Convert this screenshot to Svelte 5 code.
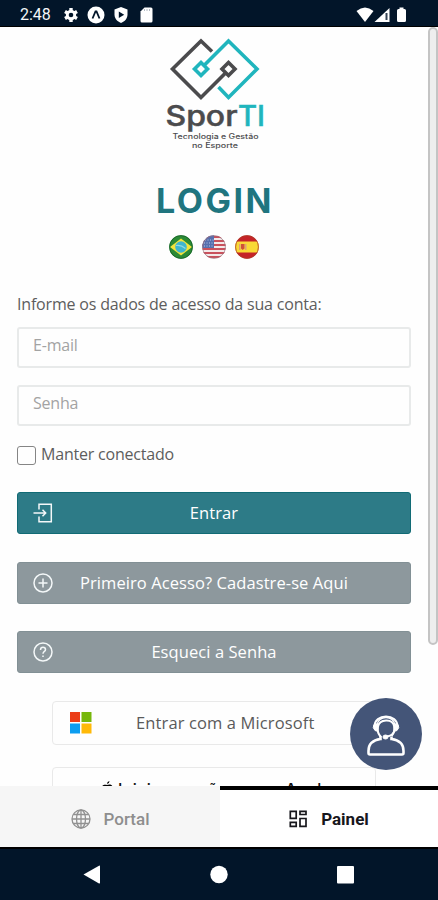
<script lang="ts">
    let email = $state('');
    let password = $state('');
    let keepConnected = $state(false);
</script>

<div class="screen">
    <header class="status-bar">
        <span class="clock">2:48</span>
        <svg class="status-left" width="96" height="20" viewBox="0 0 96 20">
            <g fill="#fff">
                <circle cx="9" cy="10" r="5.2" />
                <g stroke="#fff" stroke-width="3.4">
                    <path d="M9 3v14M3 6.5l12 7M15 6.5l-12 7" />
                </g>
                <circle cx="9" cy="10" r="2.3" fill="#021529" />
                <circle cx="34" cy="10" r="8.5" />
                <path d="M30.5 13.5l3-7h1l3 7" fill="none" stroke="#021529" stroke-width="1.8" />
                <path d="M59 2l6.500 2.500v5c0 4-2.700 7-6.500 8.500-3.800-1.500-6.500-4.500-6.500-8.500v-5z" />
                <path d="M56.800 6.600v6.400l5.400-3.200z" fill="#021529" />
                <path d="M82.500 2.500H89a1.500 1.500 0 0 1 1.500 1.500v12a1.500 1.500 0 0 1-1.500 1.500h-9a1.500 1.500 0 0 1-1.500-1.500V6.500z" />
                <path d="M82.500 4v2M85 4v2M87.500 4v2" stroke="#b3bac2" stroke-width="1" />
            </g>
        </svg>
        <svg class="status-right" width="54" height="20" viewBox="0 0 54 20">
            <path d="M1.500 6Q10 -1 18.500 6L10 17z" fill="#fff" />
            <path d="M34.500 3v14h-15z" fill="#fff" />
            <path d="M31.500 8v7" stroke="#344355" stroke-width="2" />
            <path d="M44.500 2.500h4V4h1a1.500 1.500 0 0 1 1.500 1.500v10a1.500 1.500 0 0 1-1.500 1.500h-6a1.500 1.500 0 0 1-1.500-1.500v-10A1.500 1.500 0 0 1 43.500 4h1z" fill="#fff" />
        </svg>
    </header>

    <main class="page">
        <div class="scrollbar"></div>

        <svg class="logo" width="110" height="120" viewBox="0 0 110 120">
            <g fill="none" stroke-width="3.600">
                <path d="M47 21.500L36 11 7.500 39 36 67.500l24-24" stroke="#4b4b4d" />
                <path d="M63.500 32.500l6.500 6.500-6.500 6.500-6.500-6.500z" stroke="#4b4b4d" />
                <path d="M39 35.500L63.500 11 92 39 63.500 67.500 53.500 57" stroke="#20b5bd" />
                <path d="M36 32.500l6.500 6.500-6.500 6.500-6.500-6.500z" stroke="#20b5bd" />
            </g>
            <text class="brand" x=".5" y="95.500" textLength="72" lengthAdjust="spacingAndGlyphs">Spor</text>
            <text class="brand accent" x="73" y="95.500" textLength="27" lengthAdjust="spacingAndGlyphs">TI</text>
            <text class="tagline" x="7.500" y="109" textLength="86" lengthAdjust="spacingAndGlyphs">Tecnologia e Gestão</text>
            <text class="tagline" x="27" y="118" textLength="46" lengthAdjust="spacingAndGlyphs">no Esporte</text>
        </svg>

        <h1>LOGIN</h1>

        <div class="flags">
            <svg width="24" height="24" viewBox="0 0 24 24">
                <clipPath id="round"><circle cx="12" cy="12" r="11.800" /></clipPath>
                <circle cx="12" cy="12" r="11.800" fill="#2b8a35" />
                <path d="M12 3.500L23 12 12 20.500 1 12z" fill="#f3e43c" />
                <circle cx="12" cy="12" r="5.800" fill="#3fb5cf" />
                <path d="M7 10.500q5-1 9.500 3" stroke="#8edbe5" stroke-width="1.200" fill="none" />
                <circle cx="12" cy="12" r="11.400" fill="none" stroke="#176029" stroke-width=".8" />
            </svg>
            <svg width="24" height="24" viewBox="0 0 24 24">
                <g clip-path="url(#round)">
                    <path d="M0 0h24v24H0z" fill="#f3e9e9" />
                    <path d="M0 2h24M0 6h24M0 10h24M0 14h24M0 18h24M0 22h24" stroke="#c9505c" stroke-width="1.900" />
                    <path d="M0 0h12v13H0z" fill="#566fae" />
                    <path d="M3 5h9M2 8h10M2 11h10" stroke="#bbc8e5" stroke-width="1" stroke-dasharray="1 1.500" />
                </g>
                <circle cx="12" cy="12" r="11.400" fill="none" stroke="#9b7480" stroke-width=".7" />
            </svg>
            <svg width="24" height="24" viewBox="0 0 24 24">
                <g clip-path="url(#round)">
                    <path d="M0 0h24v24H0z" fill="#c52328" />
                    <path d="M0 6.500h24v11H0z" fill="#f9d936" />
                    <path d="M4 9h1.500v6H4zM10 9h1.500v6H10z" fill="#dfa079" />
                    <path d="M6 9h3.500v4.500L7.700 15 6 13.500z" fill="#cf5038" />
                </g>
                <circle cx="12" cy="12" r="11.400" fill="none" stroke="#a84027" stroke-width=".7" />
            </svg>
        </div>

        <form onsubmit={(e) => e.preventDefault()}>
            <p class="intro">Informe os dados de acesso da sua conta:</p>
            <input class="field" type="email" placeholder="E-mail" bind:value={email} />
            <input class="field" type="password" placeholder="Senha" bind:value={password} />
            <label class="keep">
                <input type="checkbox" bind:checked={keepConnected} />
                <span>Manter conectado</span>
            </label>

            <button class="btn primary">
                <svg width="20" height="20" viewBox="0 0 20 20">
                    <path d="M6 6.500V1.200h12.300v17.600H6v-5.300M.5 10h12M9.500 6.800l3.200 3.200-3.200 3.200" />
                </svg>
                <span>Entrar</span>
            </button>
            <button class="btn" type="button">
                <svg width="20" height="20" viewBox="0 0 20 20">
                    <circle cx="10" cy="10" r="9" />
                    <path d="M10 5.500v9M5.500 10h9" />
                </svg>
                <span>Primeiro Acesso? Cadastre-se Aqui</span>
            </button>
            <button class="btn" type="button">
                <svg width="20" height="20" viewBox="0 0 20 20">
                    <circle cx="10" cy="10" r="9" />
                    <path d="M7.500 8q0-2.700 2.500-2.700T12.500 7.800C12.500 9.500 10 9.500 10 11.800M10 13.500v1.600" />
                </svg>
                <span>Esqueci a Senha</span>
            </button>
        </form>

        <div class="providers">
            <button class="provider">
                <svg width="22" height="22" viewBox="0 0 22 22">
                    <path d="M0 0h10v10H0z" fill="#eb3d17" />
                    <path d="M11.500 0h10v10h-10z" fill="#76b70b" />
                    <path d="M0 11.500h10v10H0z" fill="#0c9df0" />
                    <path d="M11.500 11.500h10v10h-10z" fill="#ffb908" />
                </svg>
                <span>Entrar com a Microsoft</span>
            </button>
            <button class="provider apple">
                <svg width="12" height="15" viewBox="0 0 12 15">
                    <path d="M8.500 0Q8.500 2.700 6 3 6 .700 8.500 0M6 4c1-.3 3.500-1.300 5.300.8-2.300 1.400-1.800 4.400.5 5.400C10.500 13.500 9 15 7.500 14.200q-1.500-.7-3 0C2 15-.5 11 .2 7.500.700 4 3.500 3 6 4" />
                </svg>
                <span>Iniciar sessão com a Apple</span>
            </button>
        </div>

        <button class="support" aria-label="Suporte">
            <svg width="40" height="44" viewBox="0 0 40 44" fill="none" stroke="#fff">
                <path d="M8.500 15C8 1 32 1 31.500 15" stroke-width="2" />
                <path d="M11 13C12 3 28 3 29 13" stroke-width="1.400" />
                <path d="M15 25C10 20 10 9 20 8.500S30 19 25.500 24" stroke-width="2" />
                <path d="M8 12.500l4-1v8l-3-1q-3-3-1-6M32 12.500l-4-1v8l3-1q3-3 1-6" fill="#fff" />
                <path d="M28.500 18.500Q27 24 20.500 24.500" stroke-width="1.800" />
                <ellipse cx="19.500" cy="25" rx="2.500" ry="2" fill="#fff" />
                <path d="M14.500 24v3C7 28 2.500 31 2.500 39v2q0 1.500 1.500 1.500h32q1.500 0 1.500-1.500v-2c0-8-4.500-11-12-12v-2.500" stroke-width="2.600" />
            </svg>
        </button>
    </main>

    <nav class="tabs">
        <button class="tab">
            <svg width="20" height="20" viewBox="0 0 20 20" fill="none" stroke="#919191" stroke-width="1.300">
                <circle cx="10" cy="10" r="9" />
                <ellipse cx="10" cy="10" rx="4.500" ry="9" />
                <path d="M10 1v18M1 10h18M2.500 5.500h15M2.500 14.500h15" />
            </svg>
            <span>Portal</span>
        </button>
        <button class="tab active">
            <svg width="19" height="18" viewBox="0 0 19 18" fill="none" stroke="#17171c" stroke-width="1.700">
                <path d="M1.300 1.300h5.900v7H1.300zM11 1.300h6v3.200h-6zM1.300 12.300h5.900v4H1.300zM11 8.500h6v7.800h-6z" />
            </svg>
            <span>Painel</span>
        </button>
    </nav>

    <footer class="android-nav">
        <svg width="20" height="20" viewBox="0 0 20 20"><path d="M.5 9.500L16 .7q1-.5 1 .6v16.500q0 1-1 .6z" /></svg>
        <svg width="20" height="20" viewBox="0 0 20 20"><circle cx="10" cy="9.500" r="8.700" /></svg>
        <svg width="20" height="20" viewBox="0 0 20 20"><rect x="1" y="1" width="17" height="17.500" rx="1" /></svg>
    </footer>
</div>

<style>
    :global(body) {
        background: #fff;
    }

    .screen {
        display: flex;
        flex-direction: column;
        width: 438px;
        height: 900px;
        overflow: hidden;
        font-family: "Open Sans", "Noto Sans", sans-serif;
        color: #5d5d5d;
    }

    button {
        font: inherit;
        cursor: pointer;
    }

    .status-bar {
        display: flex;
        align-items: center;
        box-sizing: border-box;
        flex: 0 0 27px;
        padding: 2px 29px 0 20px;
        background: #021529;
        border-bottom: 1px solid #000;
    }

    .clock {
        width: 42px;
        padding-top: 2px;
        font: 400 16px/20px Roboto, sans-serif;
        color: #f4f6f8;
    }

    .status-left,
    .status-right {
        margin-top: 1px;
    }

    .status-right {
        margin-left: auto;
    }

    .page {
        position: relative;
        display: flex;
        flex-direction: column;
        box-sizing: border-box;
        flex: 0 0 759px;
        padding: 3px 27px 0 17px;
        overflow: hidden;
        background: #fefefe;
    }

    .scrollbar {
        position: absolute;
        top: 0;
        right: 0;
        box-sizing: border-box;
        width: 10px;
        height: 618px;
        border: 2px solid #c4c4c4;
        border-radius: 5px;
        background: #eee;
    }

    .logo {
        flex-shrink: 0;
        margin-left: 148px;
    }

    .brand {
        font: 500 28px Inter, sans-serif;
        fill: #4b4b4d;
        stroke: #4b4b4d;
        stroke-width: .5px;
    }

    .brand.accent {
        fill: #20b5bd;
        stroke: #20b5bd;
    }

    .tagline {
        font: 500 7px Inter, sans-serif;
        fill: #4b4b4d;
    }

    h1 {
        margin: 30px 0 0;
        padding-left: 2px;
        font: 700 34px/42px Inter, sans-serif;
        letter-spacing: 2.5px;
        text-align: center;
        color: #20757f;
    }

    .flags {
        display: flex;
        justify-content: center;
        gap: 9px;
        margin-top: 13px;
    }

    form {
        display: flex;
        flex-direction: column;
    }

    .intro {
        margin: 34px 0 11px;
        font-size: 16px;
        line-height: 23px;
        letter-spacing: -.18px;
    }

    .field {
        box-sizing: border-box;
        height: 41px;
        margin: 0 0 17px;
        padding: 0 14px 6px;
        border: 2px solid #e8eaea;
        border-radius: 3px;
        background: #fefefe;
        font: 16px "Open Sans", sans-serif;
        letter-spacing: -.2px;
        outline: none;
    }

    .field::placeholder {
        color: #a3a3a3;
    }

    .keep {
        display: flex;
        gap: 5px;
        height: 24px;
        margin: 0 0 25px;
        font-size: 16px;
        line-height: 22px;
        letter-spacing: -.2px;
    }

    .keep input {
        appearance: none;
        box-sizing: border-box;
        width: 19px;
        height: 19px;
        margin: 3px 0 0;
        border: 1.5px solid #858585;
        border-radius: 3px;
    }

    .btn {
        display: flex;
        align-items: center;
        box-sizing: border-box;
        height: 42px;
        margin: 0 0 27.5px;
        padding: 0 15px;
        border: 1px solid #829095;
        border-radius: 3px;
        background: #8d989d;
        color: #fff;
    }

    .btn.primary {
        border-color: #116b75;
        background: #2d7b87;
    }

    .btn svg {
        fill: none;
        stroke: #f4f8f9;
        stroke-width: 1.5;
    }

    .btn span {
        flex: 1;
        padding: 0 20px 1px 0;
        font-size: 16.500px;
        letter-spacing: .08px;
        text-align: center;
        white-space: nowrap;
    }

    .providers {
        display: flex;
        flex-direction: column;
        gap: 22px;
        width: 324px;
        margin-left: 35px;
    }

    .provider {
        display: flex;
        align-items: center;
        box-sizing: border-box;
        flex: 0 0 44px;
        padding: 0 17px;
        border: 1.5px solid #e9e9e9;
        border-radius: 4px;
        background: #fefefe;
        color: #5a5a5a;
        font-size: 16.500px;
        letter-spacing: .12px;
    }

    .provider span {
        margin-left: 44px;
        padding-bottom: 1px;
        white-space: nowrap;
    }

    .provider.apple {
        padding-left: 48px;
        color: #111;
        font: 500 16px Inter, sans-serif;
        letter-spacing: .35px;
    }

    .provider.apple span {
        margin-left: 5px;
        padding: 0;
    }

    .support {
        position: absolute;
        right: 16px;
        bottom: 16px;
        display: grid;
        place-items: center;
        width: 72px;
        height: 72px;
        padding: 0;
        border: 0;
        border-radius: 50%;
        background: #445578;
    }

    .tabs {
        display: flex;
        flex: 0 0 61px;
    }

    .tab {
        display: flex;
        align-items: center;
        justify-content: center;
        gap: 13px;
        box-sizing: border-box;
        width: 220px;
        padding: 5px 0 0;
        border: 0;
        background: #f6f6f6;
        color: #8e8e8e;
        font: 500 17px Roboto, sans-serif;
    }

    .tab.active {
        width: 218px;
        padding-top: 1px;
        border-top: 4px solid #000;
        background: #fff;
        color: #17171c;
        font-weight: 700;
    }

    .android-nav {
        display: flex;
        align-items: center;
        justify-content: center;
        gap: 106.500px;
        box-sizing: border-box;
        flex: 0 0 53px;
        border-top: 2px solid #000;
        background: #021529;
        fill: #fff;
    }
</style>
